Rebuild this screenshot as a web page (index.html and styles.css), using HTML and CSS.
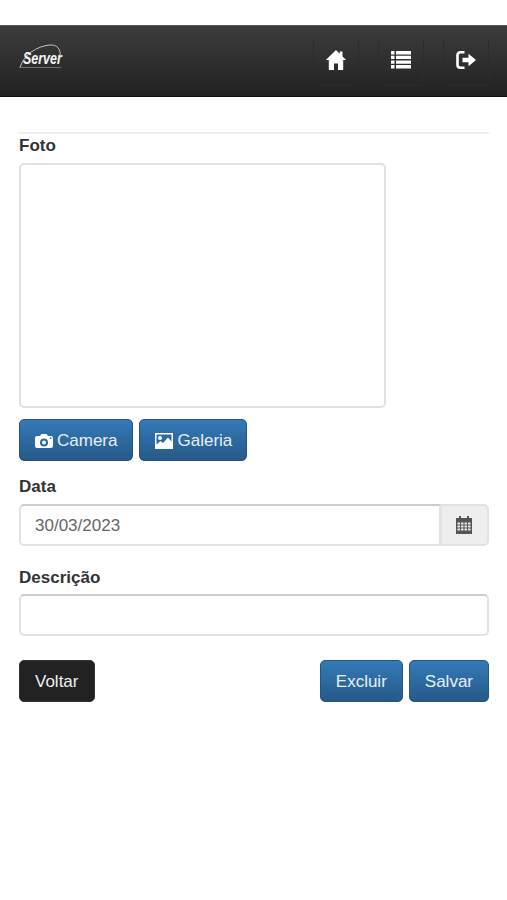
FILE: index.html
```html
<!DOCTYPE html>
<html lang="en">

<head>
    <meta charset="UTF-8">
    <meta name="viewport" content="width=device-width, initial-scale=1.0">
    <title>Foto</title>
    <link rel="stylesheet" href="styles.css">
</head>

<body>
    <div class="navbar">
        <div class="logo">
            <svg class="logo-arc" width="46" height="30" viewBox="0 0 46 30">
                <path d="M1 25C4 12 18 3 31 2c7-.5 11 4 10 11" fill="none" stroke="#c4c4c4" stroke-width="1"/>
            </svg>
            <span class="logo-text">Server</span>
            <span class="logo-sub"></span>
        </div>
        <div class="nav-links">
            <a class="nav-btn">
                <svg width="22" height="22" viewBox="0 0 22 22">
                    <path fill="#fff" d="M11 1 0.8 11h3v10h5.2v-6.500h4V21h5.200V11h3L17.500 7.600V2.500h-2.800v2.300z"/>
                </svg>
            </a>
            <a class="nav-btn">
                <svg width="22" height="22" viewBox="0 0 22 22">
                    <path fill="#fff" d="M1 2h3.500v3.500H1zM6 2h15v3.500H6zM1 6.800h3.500v3.300H1zM6 6.800h15v3.300H6zM1 11.400h3.500v3.300H1zM6 11.400h15v3.300H6zM1 16h3.500v3.500H1zM6 16h15v3.500H6z"/>
                </svg>
            </a>
            <a class="nav-btn">
                <svg width="22" height="22" viewBox="0 0 22 22">
                    <path fill="none" stroke="#fff" stroke-width="2.600" d="M9.500 3.300H5.500Q2.500 3.300 2.500 6.300v9.400q0 3 3 3h4"/>
                    <path fill="#fff" d="M7.500 8.700h6V4.800l7.500 6.200-7.500 6.200v-3.900h-6z"/>
                </svg>
            </a>
        </div>
    </div>

    <div class="content">
        <hr class="divider">
        <label class="field-label">Foto</label>
        <div class="photo-box"></div>
        <div class="photo-btns">
            <a class="btn btn-blue">
                <svg width="18" height="14" viewBox="0 0 18 14">
                    <path fill="#fff" fill-rule="evenodd" d="M2 2h3l1.500-2h5L13 2h3q2 0 2 2v8q0 2-2 2H2q-2 0-2-2V4q0-2 2-2zm7 2.500a4 4 0 1 0 0 8 4 4 0 0 0 0-8zm0 2a2 2 0 1 1 0 4 2 2 0 0 1 0-4zM15 3.500h1.500V5H15z"/>
                </svg>
                Camera
            </a>
            <a class="btn btn-blue">
                <svg width="18" height="16" viewBox="0 0 18 16">
                    <path fill="#fff" fill-rule="evenodd" d="M0 0h18v16H0zm1.500 1.500v10l4-3.500 2.500 2 5-5.500 3.500 4V1.500zM5 3a2 2 0 1 1 0 4 2 2 0 0 1 0-4z"/>
                </svg>
                Galeria
            </a>
        </div>

        <label class="field-label label-data">Data</label>
        <div class="input-group">
            <input class="text-input" type="text" value="30/03/2023">
            <span class="input-addon">
                <svg width="16" height="18" viewBox="0 0 16 18">
                    <path fill="#555" fill-rule="evenodd" d="M3 0h2v2h6V0h2v2h3v16H0V2h3zM1.500 6.500v2h2.500v-2zm3.500 0v2h2.500v-2zm3.500 0v2H11v-2zm3.500 0v2h2.500v-2zm-10.500 3v2h2.500v-2zm3.500 0v2h2.500v-2zm3.500 0v2H11v-2zm3.500 0v2h2.500v-2zm-10.500 3v2h2.500v-2zm3.500 0v2h2.500v-2zm3.500 0v2H11v-2zm3.500 0v2h2.500v-2z"/>
                </svg>
            </span>
        </div>

        <label class="field-label label-desc">Descrição</label>
        <input class="text-input input-full" type="text">

        <div class="form-actions">
            <a class="btn btn-dark">Voltar</a>
            <div class="actions-right">
                <a class="btn btn-blue">Excluir</a>
                <a class="btn btn-blue">Salvar</a>
            </div>
        </div>
    </div>
</body>

</html>
```

FILE: styles.css
```css
* {
    margin: 0;
    padding: 0;
    box-sizing: border-box;
}

body {
    font-family: "Liberation Sans", Arial, sans-serif;
    font-size: 17px;
    color: #333;
    background: #fff;
    padding-top: 25px;
}

.navbar {
    display: flex;
    justify-content: space-between;
    height: 72px;
    padding: 0 18px 0 19px;
    background: linear-gradient(#3c3c3c, #222222);
    border-top: 1px solid #555;
    border-bottom: 1px solid #111;
}

.logo {
    position: relative;
    width: 46px;
    height: 30px;
    margin-top: 17px;
}

.logo-arc {
    position: absolute;
    top: 0;
    left: 0;
}

.logo-text {
    position: absolute;
    top: 7px;
    left: 4px;
    font-size: 16px;
    font-weight: bold;
    font-style: italic;
    color: #f4f4f4;
    transform: scaleX(0.78);
    transform-origin: left;
}

.logo-sub {
    position: absolute;
    top: 24px;
    left: 0;
    width: 42px;
    height: 1px;
    background: #6e6e6e;
}

.nav-links {
    display: flex;
    gap: 19px;
    margin-top: 11px;
}

.nav-btn {
    display: flex;
    justify-content: center;
    padding-top: 11px;
    width: 46px;
    height: 49px;
    border: 1px solid #2c2c2c;
    border-top-color: transparent;
    border-radius: 5px;
}

.content {
    padding: 35px 18px 0 19px;
}

.divider {
    border: 0;
    border-top: 2px solid #eeeeee;
}

.field-label {
    display: block;
    font-weight: bold;
    line-height: 22px;
    margin-top: 1px;
    margin-bottom: 6px;
}

.photo-box {
    width: 367px;
    height: 245px;
    border: 2px solid #e0e0e0;
    border-radius: 5px;
}

.photo-btns {
    display: flex;
    gap: 6px;
    margin-top: 11px;
}

.btn {
    display: inline-flex;
    align-items: center;
    gap: 4px;
    height: 42px;
    padding: 1px 15px 0;
    border-radius: 5px;
    font-size: 17px;
    color: #fff;
    cursor: pointer;
}

.photo-btns .btn + .btn {
    padding-right: 14px;
}

.btn-blue {
    background: linear-gradient(#337ab7, #265a88);
    border: 1px solid #245580;
    color: #e8eff6;
}

.btn-dark {
    width: 76px;
    background: #222222;
    border: 1px solid #333;
    color: #f0f0f0;
}

.label-data {
    margin-top: 15px;
    margin-bottom: 6px;
}

.input-group {
    display: flex;
    height: 42px;
}

.text-input {
    flex: 1;
    min-width: 0;
    padding: 1px 14px 0;
    font-family: inherit;
    font-size: 17px;
    color: #666;
    background: #fff;
    border: 2px solid #e2e2e2;
    border-top-color: #cccccc;
    border-radius: 5px 0 0 5px;
    outline: none;
}

.input-full {
    display: block;
    width: 100%;
    height: 42px;
    border-radius: 5px;
}

.input-addon {
    display: flex;
    align-items: center;
    justify-content: center;
    width: 48px;
    padding-right: 2px;
    background: #eeeeee;
    border: 2px solid #e2e2e2;
    border-left-width: 1px;
    border-radius: 0 5px 5px 0;
}

.label-desc {
    margin-top: 21px;
    margin-bottom: 5px;
}

.form-actions {
    display: flex;
    justify-content: space-between;
    margin-top: 24px;
}

.actions-right {
    display: flex;
    gap: 6px;
}
```
